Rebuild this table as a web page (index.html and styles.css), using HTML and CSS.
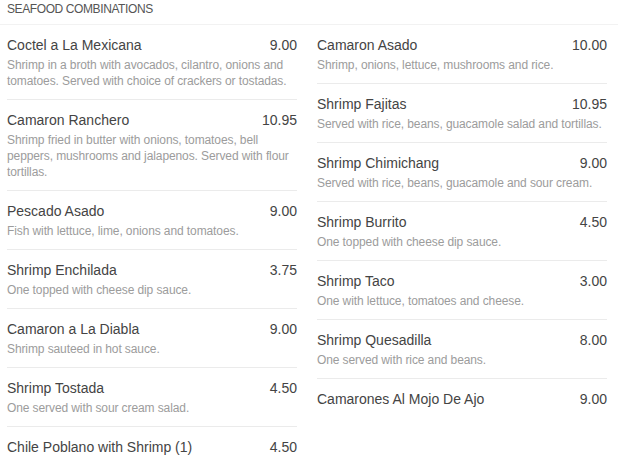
FILE: index.html
```html
<!DOCTYPE html>
<html>
<head>
<meta charset="utf-8">
<link rel="stylesheet" href="styles.css">
</head>
<body>
<div class="page">
  <h1 class="section-title">SEAFOOD COMBINATIONS</h1>
  <div class="columns">
    <div class="col">
      <div class="item">
        <div class="row"><span class="name">Coctel a La Mexicana</span><span class="price">9.00</span></div>
        <p class="desc">Shrimp in a broth with avocados, cilantro, onions and tomatoes. Served with choice of crackers or tostadas.</p>
      </div>
      <div class="item">
        <div class="row"><span class="name">Camaron Ranchero</span><span class="price">10.95</span></div>
        <p class="desc">Shrimp fried in butter with onions, tomatoes, bell peppers, mushrooms and jalapenos. Served with flour tortillas.</p>
      </div>
      <div class="item">
        <div class="row"><span class="name">Pescado Asado</span><span class="price">9.00</span></div>
        <p class="desc">Fish with lettuce, lime, onions and tomatoes.</p>
      </div>
      <div class="item">
        <div class="row"><span class="name">Shrimp Enchilada</span><span class="price">3.75</span></div>
        <p class="desc">One topped with cheese dip sauce.</p>
      </div>
      <div class="item">
        <div class="row"><span class="name">Camaron a La Diabla</span><span class="price">9.00</span></div>
        <p class="desc">Shrimp sauteed in hot sauce.</p>
      </div>
      <div class="item">
        <div class="row"><span class="name">Shrimp Tostada</span><span class="price">4.50</span></div>
        <p class="desc">One served with sour cream salad.</p>
      </div>
      <div class="item last">
        <div class="row"><span class="name">Chile Poblano with Shrimp (1)</span><span class="price">4.50</span></div>
      </div>
    </div>
    <div class="col">
      <div class="item">
        <div class="row"><span class="name">Camaron Asado</span><span class="price">10.00</span></div>
        <p class="desc">Shrimp, onions, lettuce, mushrooms and rice.</p>
      </div>
      <div class="item">
        <div class="row"><span class="name">Shrimp Fajitas</span><span class="price">10.95</span></div>
        <p class="desc">Served with rice, beans, guacamole salad and tortillas.</p>
      </div>
      <div class="item">
        <div class="row"><span class="name">Shrimp Chimichang</span><span class="price">9.00</span></div>
        <p class="desc">Served with rice, beans, guacamole and sour cream.</p>
      </div>
      <div class="item">
        <div class="row"><span class="name">Shrimp Burrito</span><span class="price">4.50</span></div>
        <p class="desc">One topped with cheese dip sauce.</p>
      </div>
      <div class="item">
        <div class="row"><span class="name">Shrimp Taco</span><span class="price">3.00</span></div>
        <p class="desc">One with lettuce, tomatoes and cheese.</p>
      </div>
      <div class="item">
        <div class="row"><span class="name">Shrimp Quesadilla</span><span class="price">8.00</span></div>
        <p class="desc">One served with rice and beans.</p>
      </div>
      <div class="item last">
        <div class="row"><span class="name">Camarones Al Mojo De Ajo</span><span class="price">9.00</span></div>
      </div>
    </div>
  </div>
</div>
</body>
</html>
```

FILE: styles.css
```css
html, body {
  margin: 0;
  padding: 0;
  background: #fff;
}
body {
  font-family: "Liberation Sans", Arial, sans-serif;
  color: #333;
  width: 618px;
  height: 466px;
  overflow: hidden;
}
.section-title {
  margin: 0;
  font-size: 12px;
  letter-spacing: -0.4px;
  font-weight: normal;
  color: #555;
  line-height: 16px;
  padding: 1px 7px 7px;
  border-bottom: 1px solid #f2f2f2;
}
.columns {
  display: grid;
  grid-template-columns: 290px 290px;
  column-gap: 20px;
  padding: 0 11px 0 7px;
}
.item {
  padding: 10px 0 10px;
  border-bottom: 1px solid #ebebeb;
}
.item.last {
  border-bottom: none;
}
.row {
  display: flex;
  justify-content: space-between;
  font-size: 14px;
  line-height: 20px;
  color: #444;
}
.desc {
  margin: 2px 0 0;
  font-size: 12px;
  line-height: 16px;
  letter-spacing: -0.1px;
  color: #9c9c9c;
}
```
